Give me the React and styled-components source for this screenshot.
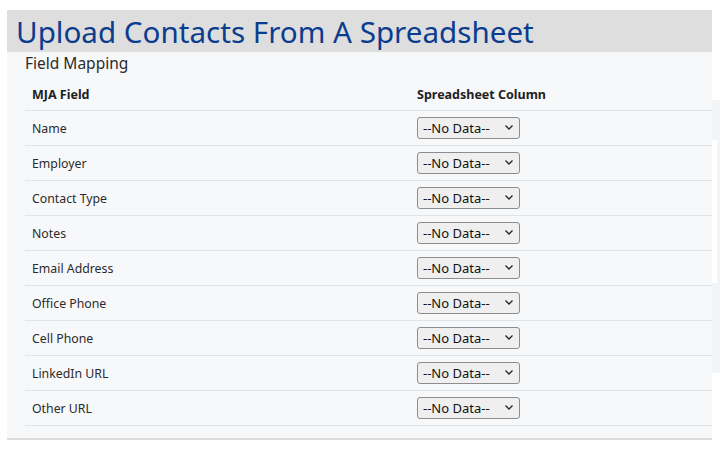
import styled, { createGlobalStyle } from 'styled-components'

const GlobalStyle = createGlobalStyle`
  body {
    margin: 0;
    background: #ffffff;
    font-family: 'Noto Sans', 'Open Sans', sans-serif;
  }
`

const Page = styled.div`
  display: flex;
  flex-direction: row;
  align-items: flex-start;
  padding: 10px 0 0 7px;
`

const Panel = styled.div`
  width: 705px;
  display: flex;
  flex-direction: column;
`

const Header = styled.div`
  background: #dedede;
  height: 42px;
  display: flex;
  align-items: center;
  padding-left: 9px;
`

const Title = styled.h1`
  margin: 0;
  font-family: 'Noto Sans', sans-serif;
  font-weight: 400;
  font-size: 29.6px;
  color: #0b3d8f;
  line-height: 1;
  margin-top: 2px;
`

const Body = styled.div`
  background: #f7f8fa;
  padding: 0 0 12px 18px;
  border-bottom: 2px solid #dcdcdc;
`

const SubTitle = styled.div`
  font-size: 15.5px;
  color: #2b2b2b;
  height: 22px;
  line-height: 22px;
`

const Table = styled.table`
  width: 100%;
  border-collapse: collapse;
  margin-top: 7px;
`

const Th = styled.th`
  text-align: left;
  font-size: 12.5px;
  font-weight: 700;
  color: #212121;
  height: 27px;
  padding: 0 0 2px 7px;
  border-bottom: 1px solid #e1e3e6;
  width: ${p => p.$w || 'auto'};
`

const Td = styled.td`
  height: 34px;
  font-size: 12.3px;
  color: #2b2b2b;
  padding: 0 0 0 7px;
  border-bottom: 1px solid #e1e3e6;
`

const SelectWrap = styled.div`
  position: relative;
  width: 103px;
  height: 22px;
`

const Select = styled.select`
  appearance: none;
  width: 100%;
  height: 100%;
  border: 1px solid #8d8d8d;
  border-radius: 3px;
  background: #efefef;
  font-family: 'Noto Sans', sans-serif;
  font-size: 13px;
  color: #111;
  padding: 0 0 0 5px;
  margin: 0;
`

const Chevron = styled.svg`
  position: absolute;
  right: 7px;
  top: 8px;
  pointer-events: none;
`

const SideStrip = styled.div`
  margin-top: 90px;
  width: 8px;
  height: 233px;
  background: #f3f4f6;
  display: flex;
  flex-direction: column;
  padding-top: 40px;
`

const SideWhite = styled.div`
  width: 5px;
  height: 143px;
  background: #ffffff;
`

const fields = [
  'Name',
  'Employer',
  'Contact Type',
  'Notes',
  'Email Address',
  'Office Phone',
  'Cell Phone',
  'LinkedIn URL',
  'Other URL',
]

const App = () => {
  return <>
    <GlobalStyle />
    <Page>
      <Panel>
        <Header><Title>Upload Contacts From A Spreadsheet</Title></Header>
        <Body>
          <SubTitle>Field Mapping</SubTitle>
          <Table>
            <thead>
              <tr><Th $w="378px">MJA Field</Th><Th>Spreadsheet Column</Th></tr>
            </thead>
            <tbody>
              {fields.map(f => <tr key={f}>
                <Td>{f}</Td>
                <Td>
                  <SelectWrap>
                    <Select defaultValue="">
                      <option value="">--No Data--</option>
                    </Select>
                    <Chevron width="8" height="5" viewBox="0 0 8 5">
                      <path d="M0.5 0.5 L4 4 L7.5 0.5" fill="none" stroke="#222" strokeWidth="1.3" />
                    </Chevron>
                  </SelectWrap>
                </Td>
              </tr>)}
            </tbody>
          </Table>
        </Body>
      </Panel>
      <SideStrip><SideWhite /></SideStrip>
    </Page>
  </>
}

export default App
